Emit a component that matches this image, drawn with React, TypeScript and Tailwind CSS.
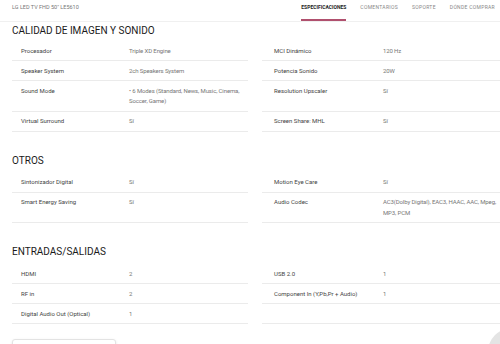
import type { ReactNode } from "react";

type Cell = [string, ReactNode] | null;
type Section = { title: string; rows: [Cell, Cell][] };

const sections: Section[] = [
  {
    title: "CALIDAD DE IMAGEN Y SONIDO",
    rows: [
      [["Procesador", "Triple XD Engine"], ["MCI Dinámico", "120 Hz"]],
      [["Speaker System", "2ch Speakers System"], ["Potencia Sonido", "20W"]],
      [
        [
          "Sound Mode",
          <>
            • 6 Modes (Standard, News, Music, Cinema,
            <br />
            Soccer, Game)
          </>,
        ],
        ["Resolution Upscaler", "Sí"],
      ],
      [["Virtual Surround", "Sí"], ["Screen Share: MHL", "Sí"]],
    ],
  },
  {
    title: "OTROS",
    rows: [
      [["Sintonizador Digital", "Sí"], ["Motion Eye Care", "Sí"]],
      [
        ["Smart Energy Saving", "Sí"],
        [
          "Audio Codec",
          <>
            AC3(Dolby Digital), EAC3, HAAC, AAC, Mpeg,
            <br />
            MP3, PCM
          </>,
        ],
      ],
    ],
  },
  {
    title: "ENTRADAS/SALIDAS",
    rows: [
      [["HDMI", "2"], ["USB 2.0", "1"]],
      [["RF in", "2"], ["Component In (Y,Pb,Pr + Audio)", "1"]],
      [["Digital Audio Out (Optical)", "1"], null],
    ],
  },
];

const tabs = ["ESPECIFICACIONES", "COMENTARIOS", "SOPORTE", "DÓNDE COMPRAR"];

export default function App() {
  return (
    <div className="relative h-[344px] w-[500px] overflow-hidden bg-white font-['Roboto',sans-serif]">
      <header className="flex h-[22px] items-start justify-between border-b border-[#f0f0f0] pl-[12px] pr-[5px]">
        <p className="pt-[4px] text-[5.5px] leading-[6px] text-[#777]">LG LED TV FHD 50" LE5610</p>
        <nav className="flex gap-[14px]">
          {tabs.map((t, i) => (
            <div
              key={t}
              className={
                i === 0
                  ? "h-[21px] border-b-2 border-[#b0506e] pt-[4px] text-[5px] font-bold leading-[7px] text-[#222]"
                  : "h-[21px] pt-[4px] text-[5px] leading-[7px] tracking-[0.3px] text-[#888]"
              }
            >
              {t}
            </div>
          ))}
        </nav>
      </header>

      <main className="pl-[12px]">
        {sections.map((s, i) => (
          <section key={s.title} className={i === 0 ? "mt-[3px]" : "mt-[23px]"}>
            <h2
              className={`text-[10px] leading-[12px] text-[#1a1a1a] ${i === 0 ? "mb-[4px]" : "mb-[6px]"}`}
            >
              {s.title}
            </h2>
            {s.rows.map((r, j) => (
              <div key={j} className="grid grid-cols-[236px_238px] gap-x-[14px]">
                <SpecCell cell={r[0]} labelClass="w-[117px] pl-[9px]" />
                <SpecCell cell={r[1]} labelClass="w-[121px] pl-[12px]" />
              </div>
            ))}
          </section>
        ))}
        <div className="mt-[15px] h-[30px] w-[104px] rounded-[3px] border border-[#e3e3e3] bg-white shadow-sm" />
      </main>

      <div className="absolute left-[488px] top-[328px] h-[48px] w-[48px] rounded-full bg-[#e4e4e4]" />
    </div>
  );
}

function SpecCell({ cell, labelClass }: { cell: Cell; labelClass: string }) {
  return (
    <div className="flex border-b border-[#ebebeb] pb-[4px] pt-[4.5px] text-[6px] leading-[10.5px]">
      {cell && (
        <>
          <span className={`shrink-0 text-[#444] ${labelClass}`}>{cell[0]}</span>
          <span className="whitespace-nowrap tracking-[-0.12px] text-[#777]">{cell[1]}</span>
        </>
      )}
    </div>
  );
}
